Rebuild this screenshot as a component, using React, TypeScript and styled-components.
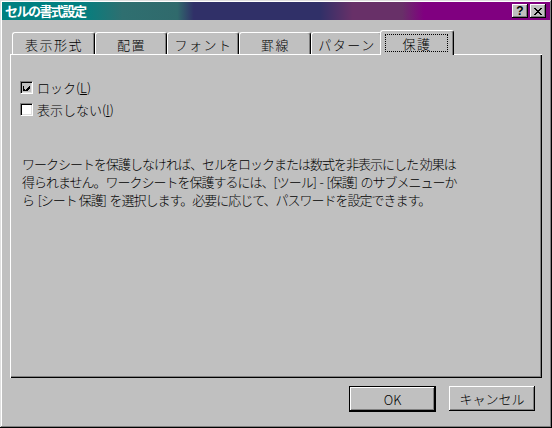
import React from 'react';
import styled, { createGlobalStyle } from 'styled-components';

const GlobalStyle = createGlobalStyle`
  html,
  body {
    margin: 0;
    background: #c0c0c0;
  }
  body {
    font-family: "Noto Sans CJK JP", "Liberation Sans", sans-serif;
    font-weight: 300;
    color: #000;
  }
`;

const Window = styled.div`
  width: 552px;
  height: 428px;
  box-sizing: border-box;
  padding: 2px;
  display: flex;
  flex-direction: column;
  background: #c0c0c0;
  box-shadow: inset -1px -1px #000, inset 1px 1px #dfdfdf, inset -2px -2px #808080,
    inset 2px 2px #fff;
`;

const TitleBar = styled.div`
  height: 18px;
  display: flex;
  align-items: center;
  padding: 0 4px 0 3px;
  background: linear-gradient(
    to right,
    #008080 0%,
    #008080 14%,
    #2f6f70 22%,
    #306a6c 32%,
    #303068 35%,
    #303068 58%,
    #683068 64%,
    #683068 73%,
    #800080 77%,
    #800080 100%
  );
`;

const Title = styled.span`
  flex: 1;
  color: #fff;
  font-weight: 700;
  font-size: 13px;
  letter-spacing: -1.5px;
  line-height: 18px;
  white-space: nowrap;
`;

const CaptionButton = styled.div`
  width: 16px;
  height: 14px;
  margin-left: 2px;
  box-sizing: border-box;
  display: flex;
  align-items: center;
  justify-content: center;
  background: #c0c0c0;
  font-family: "Liberation Sans", sans-serif;
  font-weight: 700;
  font-size: 12px;
  line-height: 1;
  box-shadow: inset -1px -1px #000, inset 1px 1px #fff, inset -2px -2px #808080;
`;

const Content = styled.div`
  flex: 1;
  display: flex;
  flex-direction: column;
  padding: 10px 8px 0 8px;
`;

const TabStrip = styled.div`
  height: 24px;
  display: flex;
  align-items: flex-end;
  padding-left: 2px;
`;

const Tab = styled.div<{ $w: number; $active?: boolean }>`
  position: relative;
  z-index: ${(p) => (p.$active ? 2 : 1)};
  width: ${(p) => p.$w}px;
  height: ${(p) => (p.$active ? 25 : 22)}px;
  margin: ${(p) => (p.$active ? '0 -2px -1px -2px' : '0')};
  box-sizing: border-box;
  display: flex;
  align-items: stretch;
  padding: ${(p) => (p.$active ? '3px 5px 3px 4px' : '0')};
  background: #c0c0c0;
  border-top: 1px solid #fff;
  border-left: 1px solid #fff;
  border-right: 1px solid #000;
  border-radius: 3px 3px 0 0;
  box-shadow: inset -1px 0 #808080;
  font-size: 13px;
  letter-spacing: 1.5px;
  white-space: nowrap;
`;

const TabLabel = styled.span<{ $focus?: boolean }>`
  flex: 1;
  display: flex;
  align-items: center;
  justify-content: center;
  border: 1px ${(p) => (p.$focus ? 'dotted #000' : 'solid transparent')};
  padding: 1px 0 0 1px;
`;

const Panel = styled.div`
  height: 324px;
  box-sizing: border-box;
  padding: 22px 0 0 10px;
  box-shadow: inset 1px 1px #fff, inset -1px -1px #000, inset -2px -2px #808080;
`;

const CheckRow = styled.label`
  height: 22px;
  display: flex;
  align-items: center;
  gap: 4px;
  font-size: 13px;
  white-space: nowrap;
`;

const Box = styled.span<{ $fill: string }>`
  width: 13px;
  height: 13px;
  box-sizing: border-box;
  display: flex;
  align-items: center;
  justify-content: center;
  background: ${(p) => p.$fill};
  border-top: 1px solid #808080;
  border-left: 1px solid #808080;
  border-right: 1px solid #fff;
  border-bottom: 1px solid #fff;
  box-shadow: inset 1px 1px #000, inset -1px -1px #dfdfdf;
`;

const Note = styled.p`
  margin: 35px 0 0 2px;
  font-size: 13px;
  line-height: 18px;
  letter-spacing: -1px;
  white-space: pre;
`;

const ButtonRow = styled.div`
  display: flex;
  justify-content: flex-end;
  align-items: flex-start;
  gap: 13px;
  padding: 8px 7px 0 0;
`;

const PushButton = styled.div<{ $w: number; $default?: boolean }>`
  width: ${(p) => p.$w}px;
  height: ${(p) => (p.$default ? 26 : 25)}px;
  box-sizing: border-box;
  display: flex;
  align-items: center;
  justify-content: center;
  background: #c0c0c0;
  font-size: 13px;
  box-shadow: ${(p) =>
    p.$default
      ? 'inset 0 0 0 1px #000, inset -2px -2px #000, inset 2px 2px #fff, inset -3px -3px #808080'
      : 'inset -1px -1px #000, inset 1px 1px #fff, inset -2px -2px #808080'};
`;

const CheckMark = () => (
  <svg width="7" height="7" viewBox="0 0 7 7" shapeRendering="crispEdges">
    <path d="M0 2h1v3h1v1h1v-1h1v-1h1v-1h1v-1h1v3h-1v1h-1v1h-1v1h-1v1h-1v-1h-1v-1h-1z" fill="#000" />
  </svg>
);

const CloseGlyph = () => (
  <svg width="8" height="7" viewBox="0 0 8 7" shapeRendering="crispEdges">
    <path
      d="M0 0h2v1h1v1h2v-1h1v-1h2v1h-1v1h-1v1h-1v1h1v1h1v1h1v1h-2v-1h-1v-1h-2v1h-1v1h-2v-1h1v-1h1v-1h1v-1h-1v-1h-1v-1h-1z"
      fill="#000"
    />
  </svg>
);

const tabs = [
  { label: '表示形式', w: 83 },
  { label: '配置', w: 72 },
  { label: 'フォント', w: 72 },
  { label: '罫線', w: 72 },
  { label: 'パターン', w: 71 },
];

const note = [
  'ワークシートを保護しなければ、セルをロックまたは数式を非表示にした 効果は',
  '得られません。ワークシートを保護するには、[ツール]  -  [保護]  のサブメニューか',
  'ら  [シート 保護]  を選択します。必要に応じて、パスワードを設定できます。',
];

const App: React.FC = () => {
  return (
    <>
      <GlobalStyle />
      <Window>
        <TitleBar>
          <Title>セルの書式設定</Title>
          <CaptionButton>?</CaptionButton>
          <CaptionButton>
            <CloseGlyph />
          </CaptionButton>
        </TitleBar>
        <Content>
          <TabStrip>
            {tabs.map((t) => (
              <Tab key={t.label} $w={t.w}>
                <TabLabel>{t.label}</TabLabel>
              </Tab>
            ))}
            <Tab $w={74} $active>
              <TabLabel $focus>保護</TabLabel>
            </Tab>
          </TabStrip>
          <Panel>
            <CheckRow>
              <Box $fill="#c0c0c0">
                <CheckMark />
              </Box>
              <span>
                ロック(<u>L</u>)
              </span>
            </CheckRow>
            <CheckRow>
              <Box $fill="#fff" />
              <span>
                表示しない(<u>I</u>)
              </span>
            </CheckRow>
            <Note>{note.join('\n')}</Note>
          </Panel>
          <ButtonRow>
            <PushButton $w={87} $default>
              OK
            </PushButton>
            <PushButton $w={86}>キャンセル</PushButton>
          </ButtonRow>
        </Content>
      </Window>
    </>
  );
};

export default App;
